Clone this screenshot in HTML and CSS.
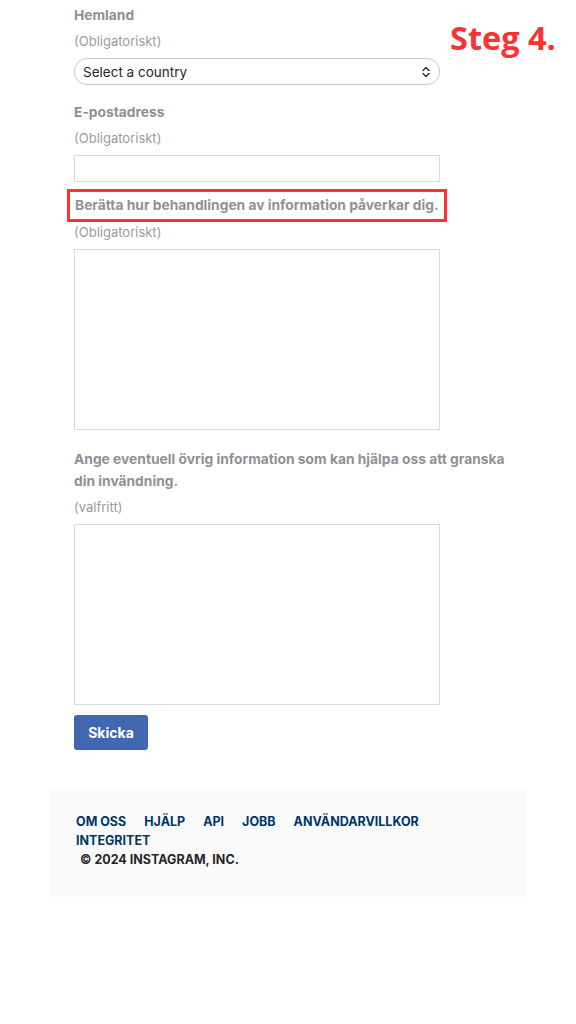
FILE: index.html
```html
<html>
<head>
<title>Instagram - Invändning</title>
<link rel="stylesheet" href="styles.css">
</head>
<body>

<div class="page">
  <div class="step">Steg 4.</div>

  <form class="form">
    <div class="field">
      <label class="label">Hemland</label>
      <div class="hint">(Obligatoriskt)</div>
      <div class="select">
        <span>Select a country</span>
        <svg width="10" height="12" viewBox="0 0 10 12"><path d="M2 4.5 L5 1.5 L8 4.5 M2 7.5 L5 10.5 L8 7.5" fill="none" stroke="#333" stroke-width="1.5" stroke-linecap="round" stroke-linejoin="round"/></svg>
      </div>
    </div>

    <div class="field">
      <label class="label">E-postadress</label>
      <div class="hint">(Obligatoriskt)</div>
      <input type="text" class="input">
    </div>

    <div class="field">
      <label class="label marked">Berätta hur behandlingen av information påverkar dig.</label>
      <div class="hint">(Obligatoriskt)</div>
      <textarea class="area"></textarea>
    </div>

    <div class="field extra">
      <label class="label">Ange eventuell övrig information som kan hjälpa oss att granska din invändning.</label>
      <div class="hint">(valfritt)</div>
      <textarea class="area"></textarea>
    </div>

    <button type="button" class="submit">Skicka</button>
  </form>

  <footer class="footer">
    <nav class="links">
      <a href="#">Om oss</a>
      <a href="#">Hjälp</a>
      <a href="#">API</a>
      <a href="#">Jobb</a>
      <a href="#">Användarvillkor</a>
      <a href="#">Integritet</a>
    </nav>
    <div class="copy">© 2024 Instagram, Inc.</div>
  </footer>
</div>

</body>
</html>
```

FILE: styles.css
```css
body {
  margin: 0;
  padding: 0;
  background-color: #fff;
  font-family: 'Inter', 'Liberation Sans', sans-serif;
}

.page {
  position: relative;
  width: 576px;
}

.step {
  position: absolute;
  top: 15px;
  left: 450px;
  font-family: 'Open Sans', sans-serif;
  font-weight: 700;
  font-size: 32.5px;
  color: #ff3131;
}

.form {
  width: 366px;
  margin-left: 74px;
  padding-top: 4px;
}

.field {
  display: flex;
  flex-direction: column;
}

.label {
  font-size: 13.8px;
  font-weight: 700;
  color: #8f9196;
  line-height: 22px;
  margin-bottom: 5px;
  width: 440px;
}

.label.marked {
  width: auto;
  margin: 7px -7px 0 -7px;
  padding: 4px 5px 4px 5px;
  border: 3px solid #ff3131;
  line-height: 19px;
}

.hint {
  font-size: 13px;
  color: #9a9ba0;
  line-height: 20px;
  margin-bottom: 7px;
}

.select {
  display: flex;
  justify-content: space-between;
  align-items: center;
  height: 25px;
  padding: 0 8px 0 8px;
  border: 1px solid #c8c8c8;
  border-radius: 13px;
  font-size: 13.5px;
  color: #262626;
  margin-bottom: 16px;
}

.input {
  height: 27px;
  border: 1px solid #dbdbdb;
  margin: 0;
  padding: 0;
}

.area {
  height: 181px;
  border: 1px solid #dbdbdb;
  margin: 0;
  padding: 0;
  resize: none;
  margin-bottom: 18px;
}

.extra .label {
  width: 432px;
}

.extra .area {
  margin-bottom: 10px;
}

.submit {
  background-color: #4267b2;
  color: #fff;
  border: none;
  border-radius: 3px;
  font-family: 'Inter', 'Liberation Sans', sans-serif;
  font-weight: 700;
  font-size: 14px;
  height: 35px;
  width: 74px;
  padding: 0;
}

.footer {
  margin: 39px 50px 0 50px;
  background-color: #fafafa;
  padding: 23px 26px 28px 26px;
  height: 57px;
}

.links {
  display: flex;
  flex-wrap: wrap;
  column-gap: 18px;
  width: 380px;
}

.links a {
  color: #003569;
  text-decoration: none;
  text-transform: uppercase;
  font-weight: 700;
  font-size: 12.5px;
  line-height: 19px;
}

.copy {
  margin-left: 4px;
  color: #262626;
  text-transform: uppercase;
  font-weight: 700;
  font-size: 12.5px;
  line-height: 20px;
}
```
